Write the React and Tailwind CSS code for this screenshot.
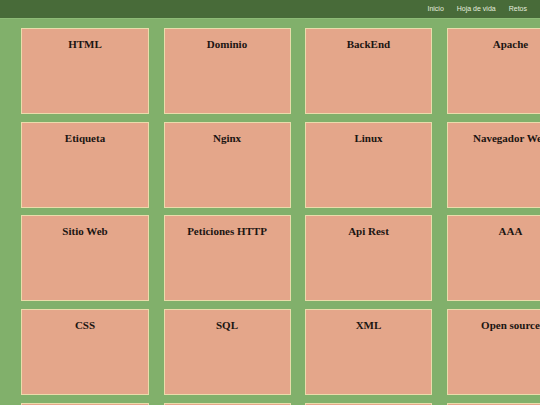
const temas = [
  'HTML', 'Dominio', 'BackEnd', 'Apache',
  'Etiqueta', 'Nginx', 'Linux', 'Navegador Web',
  'Sitio Web', 'Peticiones HTTP', 'Api Rest', 'AAA',
  'CSS', 'SQL', 'XML', 'Open source',
  '', '', '', '',
];

function Tarjeta({ titulo }) {
  return (
    <article className="h-[86px] bg-[#e4a68a] border border-[#eadcab] pt-[7px] text-center">
      {titulo && (
        <h3 className="font-['Liberation_Serif',serif] font-bold text-[11px] text-[#1b1512] whitespace-nowrap">{titulo}</h3>
      )}
    </article>
  );
}

export default function App() {
  return (
    <div className="h-screen w-screen overflow-hidden bg-[#81b06b]">
      <header className="h-[19px] bg-[#486b39] flex justify-end items-center pr-[13px] border-b border-[#8dbb77]">
        <nav className="flex gap-[13px] font-['Liberation_Sans',sans-serif] text-[7px] text-[#e6eedf]">
          <a href="#">Inicio</a>
          <a href="#">Hoja de vida</a>
          <a href="#">Retos</a>
        </nav>
      </header>
      <main className="pt-[9px] pl-[21px]">
        <section className="grid grid-cols-[128px_127px_127px_128px] gap-x-[14.5px] gap-y-[7.7px]">
          {temas.map((t, i) => (
            <Tarjeta key={i} titulo={t} />
          ))}
        </section>
      </main>
    </div>
  );
}
